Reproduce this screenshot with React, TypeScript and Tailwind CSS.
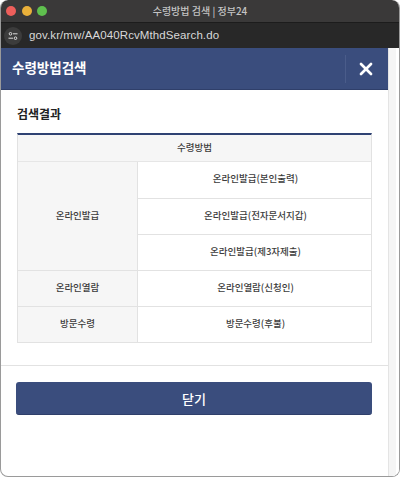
import React from 'react';
import { X } from 'lucide-react';

const FONT = "font-['Noto_Sans_CJK_KR','Noto_Sans',sans-serif]";

const rows = [
  { group: '온라인발급', items: ['온라인발급(본인출력)', '온라인발급(전자문서지갑)', '온라인발급(제3자제출)'] },
  { group: '온라인열람', items: ['온라인열람(신청인)'] },
  { group: '방문수령', items: ['방문수령(후불)'] },
];

export default function App() {
  return (
    <div className={`w-[400px] h-[477px] bg-white overflow-hidden flex flex-col rounded-lg border-x border-b border-[#9a9a9a] ${FONT}`}>
      {/* 타이틀바 */}
      <div className="relative h-[23px] shrink-0 -mx-px bg-[#3a3939] border-b border-[#1c1c1c] flex items-center justify-center rounded-t-lg">
        <div className="absolute left-[6px] top-[6px] flex gap-[5.5px]">
          <span className="w-[10px] h-[10px] rounded-full bg-[#ee5f5b]" />
          <span className="w-[10px] h-[10px] rounded-full bg-[#e9b03a]" />
          <span className="w-[10px] h-[10px] rounded-full bg-[#5fc04e]" />
        </div>
        <span className="text-[10px] leading-none font-medium text-[#c4c4c4]">수령방법 검색 | 정부24</span>
      </div>

      {/* 주소창 */}
      <div className="h-[25px] shrink-0 -mx-px bg-[#282828] flex items-center pl-[4px] gap-[7px]">
        <span className="w-[18px] h-[18px] rounded-full bg-[#3c3c3c] flex items-center justify-center">
          <svg width="10" height="10" viewBox="0 0 10 10" fill="none" stroke="#dcdcdc" strokeWidth="1">
            <circle cx="2.5" cy="2.8" r="1.3" />
            <path d="M5 2.8h4.5" />
            <circle cx="7.5" cy="7.2" r="1.3" />
            <path d="M.5 7.2H5" />
          </svg>
        </span>
        <span className="text-[11.5px] leading-none font-['Liberation_Sans',sans-serif] tracking-[0.1px] text-[#d8d8d8]">gov.kr/mw/AA040RcvMthdSearch.do</span>
      </div>

      <div className="flex flex-1 min-h-0">
        <div className="w-[387px] flex flex-col shrink-0">
          {/* 헤더 */}
          <div className="h-[42px] shrink-0 bg-[#3a4d7d] border-b border-[#2f3f6a] flex items-center justify-between">
            <h1 className="pl-[11px] pb-[1px] text-[13.5px] font-bold text-white leading-none">수령방법검색</h1>
            <div className="flex items-center justify-center w-[43px] h-[28px] pr-[3px] border-l border-[#4a5c8a]">
              <X className="w-[20px] h-[20px] text-white" strokeWidth={3.2} />
            </div>
          </div>

          {/* 검색결과 */}
          <div className="h-[276px] shrink-0 border-b border-[#e2e2e2] pl-[16px] pr-[16px]">
            <h2 className="mt-[16px] h-[16px] text-[12px] leading-[16px] font-bold text-[#222]">검색결과</h2>
            <div className="mt-[11px] border-t-2 border-[#2f4273] border-l border-r border-b border-x-[#e2e2e2] border-b-[#e2e2e2]">
              <div className="h-[27px] pb-[2px] bg-[#f6f6f6] border-b border-[#e6e6e6] flex items-center justify-center text-[9.5px] font-medium text-[#3c3c3c]">
                수령방법
              </div>
              {rows.map((row, idx) => (
                <div key={row.group} className={`flex ${idx > 0 ? 'border-t border-[#e2e2e2]' : ''}`}>
                  <div className="w-[120px] shrink-0 pb-[2px] bg-[#f6f6f6] border-r border-[#e2e2e2] flex items-center justify-center text-[9.5px] font-medium text-[#3c3c3c]">
                    {row.group}
                  </div>
                  <div className="flex-1">
                    {row.items.map((item, i) => (
                      <div
                        key={item}
                        className={`${idx > 0 ? 'h-[35px]' : 'h-[36px]'} pb-[3px] pl-[2px] flex items-center justify-center text-[9.5px] font-medium text-[#3c3c3c] ${i > 0 ? 'border-t border-[#e2e2e2]' : ''}`}
                      >
                        {item}
                      </div>
                    ))}
                  </div>
                </div>
              ))}
            </div>
          </div>

          {/* 닫기 */}
          <div className="pl-[15px] pr-[16px] pt-[16px]">
            <button className="w-full h-[33px] rounded-[3px] bg-[#3a4d7d] border-b border-[#2f3f6a] text-white text-[13px] font-medium leading-none flex items-center justify-center">
              닫기
            </button>
          </div>
        </div>

        {/* 스크롤바 */}
        <div className="flex-1 flex bg-white border-l border-[#e4e4e4]">
          <div className="w-[7px] bg-[#f5f5f5]" />
        </div>
      </div>
    </div>
  );
}
